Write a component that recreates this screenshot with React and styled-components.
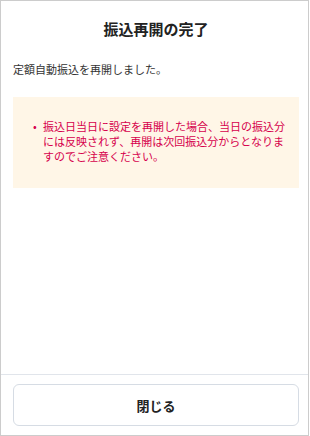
import React from "react";
import { styled, createGlobalStyle } from "styled-components";

const GlobalStyle = createGlobalStyle`
  html, body {
    margin: 0;
    padding: 0;
    background-color: #ffffff;
  }
  body {
    font-family: "Noto Sans CJK JP", "Noto Sans", sans-serif;
  }
`;

const Frame = styled.div`
  width: 309px;
  height: 436px;
  box-sizing: border-box;
  border: 1px solid #cccccc;
  display: flex;
  flex-direction: column;
  background-color: #ffffff;
`;

const Body = styled.div`
  flex: 1;
  padding: 17px 9px 0 12px;
`;

const Title = styled.h1`
  margin: 0;
  font-size: 15px;
  line-height: 22px;
  font-weight: 700;
  color: #222222;
  text-align: center;
`;

const Message = styled.p`
  margin: 21px 0 0;
  font-size: 11px;
  line-height: 16px;
  color: #333333;
`;

const Notice = styled.div`
  margin-top: 20px;
  background-color: #fff6e7;
  padding: 22px 10px 24px 20px;
`;

const NoticeItem = styled.div`
  display: flex;
  font-size: 11px;
  line-height: 15px;
  color: #d6004c;
`;

const Bullet = styled.span`
  flex: 0 0 10px;
  font-size: 11px;
`;

const NoticeText = styled.span`
  flex: 1;
`;

const Footer = styled.div`
  border-top: 1px solid #e1e5eb;
  padding: 9px 9px 9px 12px;
`;

const CloseButton = styled.button`
  width: 100%;
  height: 42px;
  box-sizing: border-box;
  border: 1px solid #d6dce4;
  border-radius: 6px;
  background-color: #ffffff;
  font-family: "Noto Sans CJK JP", "Noto Sans", sans-serif;
  font-size: 13px;
  font-weight: 700;
  color: #222222;
  cursor: pointer;
`;

function App() {
  return (
    <>
      <GlobalStyle />
      <Frame>
        <Body>
          <Title>振込再開の完了</Title>
          <Message>定額自動振込を再開しました。</Message>
          <Notice>
            <NoticeItem>
              <Bullet>•</Bullet>
              <NoticeText>
                振込日当日に設定を再開した場合、当日の振込分には反映されず、再開は次回振込分からとなりますのでご注意ください。
              </NoticeText>
            </NoticeItem>
          </Notice>
        </Body>
        <Footer>
          <CloseButton>閉じる</CloseButton>
        </Footer>
      </Frame>
    </>
  );
}

export default App;
